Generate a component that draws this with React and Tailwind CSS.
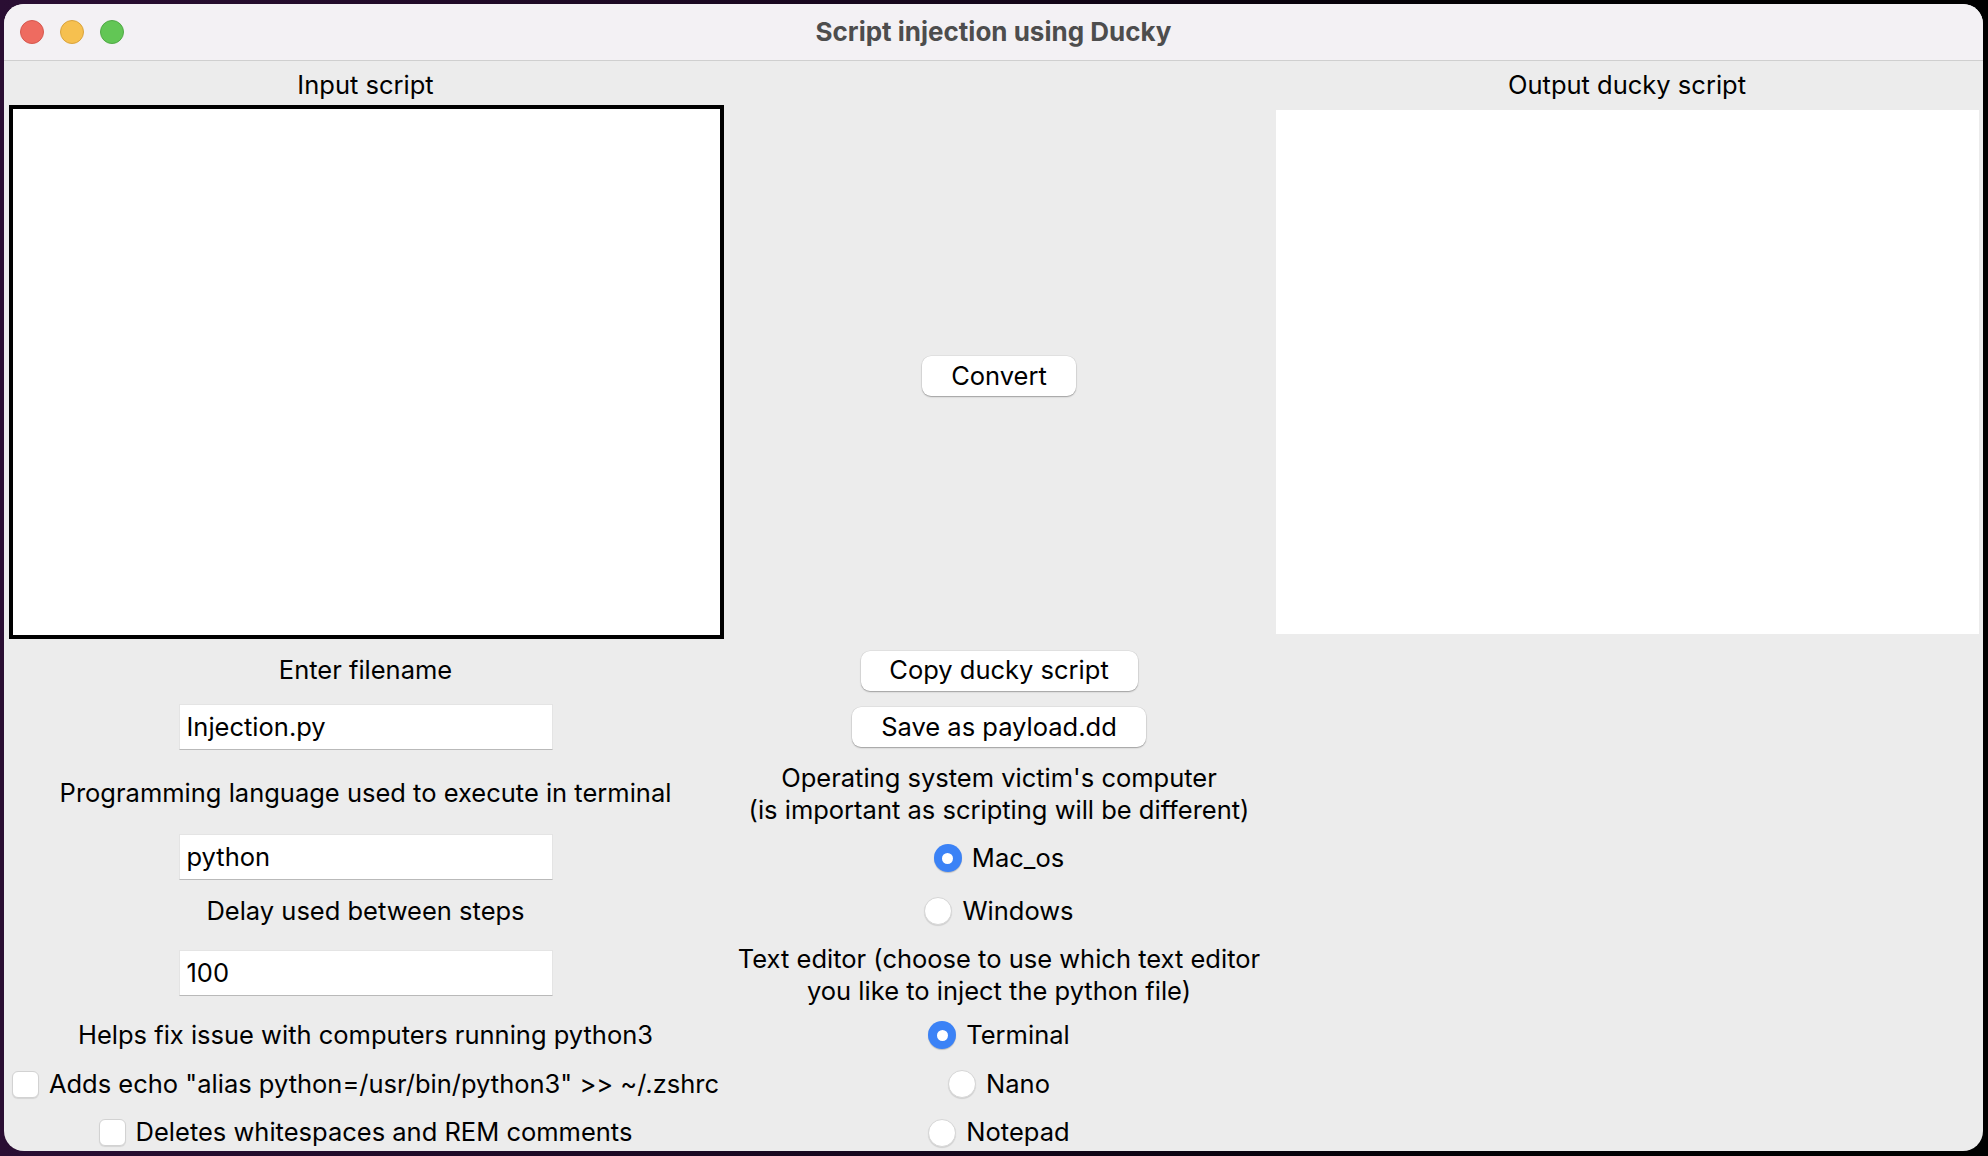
import React from "react";

const font = { fontFamily: "Inter, 'Noto Sans', sans-serif" };

function Entry({ value }) {
  return (
    <div className="w-[374px] h-[46px] bg-white border border-[#e4e4e4] border-b-[#b9b9b9] flex items-center pl-[7px] text-[25.5px] text-black">
      {value}
    </div>
  );
}

function Btn({ children, w }) {
  return (
    <div
      className={`h-[40px] ${w} bg-white rounded-[9px] shadow-[0_1px_1.5px_rgba(0,0,0,0.3),0_0_0_0.5px_rgba(0,0,0,0.08)] flex items-center justify-center text-[25.5px] text-black`}
    >
      {children}
    </div>
  );
}

function Radio({ checked, label }) {
  return (
    <div className="flex items-center gap-[10px]">
      {checked ? (
        <div className="w-[28px] h-[28px] rounded-full bg-[#3b82f6] shadow-[0_1px_1px_rgba(0,0,0,0.2)] flex items-center justify-center">
          <div className="w-[11px] h-[11px] rounded-full bg-white" />
        </div>
      ) : (
        <div className="w-[28px] h-[28px] rounded-full bg-white border border-[#d6d6d6] shadow-[0_1px_1px_rgba(0,0,0,0.12)]" />
      )}
      <span className="text-[25.5px] text-black">{label}</span>
    </div>
  );
}

function Check({ label }) {
  return (
    <div className="flex items-center gap-[10px]">
      <div className="w-[27px] h-[27px] rounded-[6px] bg-white border border-[#d2d2d2] shadow-[0_1px_1px_rgba(0,0,0,0.1)]" />
      <span className="text-[25.5px] text-black">{label}</span>
    </div>
  );
}

export default function App() {
  return (
    <div
      className="w-[1988px] h-[1156px] overflow-hidden bg-linear-to-r from-[#2a0e33] via-[#14061a] to-black pt-[4px] pl-[4px]"
      style={font}
    >
      <div className="w-[1979px] h-[1147px] rounded-[20px] overflow-hidden bg-[#ececec] flex flex-col">
        {/* Title bar */}
        <div className="h-[57px] shrink-0 bg-[#f3f1f4] border-b border-[#cfcfcf] grid grid-cols-[1fr_auto_1fr] items-center">
          <div className="flex items-center gap-[16px] pl-[16px]">
            <div className="w-[24px] h-[24px] rounded-full bg-[#ee6b60] border border-[#d5584e]" />
            <div className="w-[24px] h-[24px] rounded-full bg-[#f6c04f] border border-[#d9a33d]" />
            <div className="w-[24px] h-[24px] rounded-full bg-[#62c655] border border-[#50a946]" />
          </div>
          <div className="text-[26px] font-bold text-[#4d4d4d] pb-[2px]">Script injection using Ducky</div>
          <div />
        </div>

        {/* Body grid */}
        <div className="grid grid-cols-[723px_544px_712px] grid-rows-[44px_534px_63px_50px_82px_46px_60px_66px_56px_44px_45px] text-[25.5px] text-black">
          {/* Row 0 */}
          <div className="flex items-center justify-center pt-[4px]">Input script</div>
          <div />
          <div className="flex items-center justify-center pt-[4px]">Output ducky script</div>

          {/* Row 1 */}
          <div className="pl-[5px] pr-[3px]">
            <div className="w-full h-full bg-white border-[4px] border-black" />
          </div>
          <div className="flex items-center justify-center pt-[8px]">
            <Btn w="w-[154px]">Convert</Btn>
          </div>
          <div className="pl-[5px] pr-[4px] py-[5px]">
            <div className="w-full h-full bg-white" />
          </div>

          {/* Row 2 */}
          <div className="flex items-center justify-center">Enter filename</div>
          <div className="flex items-center justify-center">
            <Btn w="w-[277px]">Copy ducky script</Btn>
          </div>
          <div />

          {/* Row 3 */}
          <div className="flex items-center justify-center">
            <Entry value="Injection.py" />
          </div>
          <div className="flex items-center justify-center">
            <Btn w="w-[294px]">Save as payload.dd</Btn>
          </div>
          <div />

          {/* Row 4 */}
          <div className="flex items-center justify-center">
            Programming language used to execute in terminal
          </div>
          <div className="flex flex-col items-center justify-center leading-[32px] text-center pt-[2px]">
            <span>Operating system victim's computer</span>
            <span>(is important as scripting will be different)</span>
          </div>
          <div />

          {/* Row 5 */}
          <div className="flex items-center justify-center">
            <Entry value="python" />
          </div>
          <div className="flex items-center justify-center pt-[2px]">
            <Radio checked label="Mac_os" />
          </div>
          <div />

          {/* Row 6 */}
          <div className="flex items-center justify-center pt-[2px]">Delay used between steps</div>
          <div className="flex items-center justify-center pt-[2px]">
            <Radio label="Windows" />
          </div>
          <div />

          {/* Row 7 */}
          <div className="flex items-center justify-center">
            <Entry value="100" />
          </div>
          <div className="flex flex-col items-center justify-center leading-[32px] text-center whitespace-nowrap pt-[3px]">
            <span>Text editor (choose to use which text editor</span>
            <span>you like to inject the python file)</span>
          </div>
          <div />

          {/* Row 8 */}
          <div className="flex items-center justify-center pt-[2px]">
            Helps fix issue with computers running python3
          </div>
          <div className="flex items-center justify-center pt-[2px]">
            <Radio checked label="Terminal" />
          </div>
          <div />

          {/* Row 9 */}
          <div className="flex items-center justify-center whitespace-nowrap">
            <Check label={'Adds echo "alias python=/usr/bin/python3" >> ~/.zshrc'} />
          </div>
          <div className="flex items-center justify-center">
            <Radio label="Nano" />
          </div>
          <div />

          {/* Row 10 */}
          <div className="flex items-center justify-center pt-[8px]">
            <Check label="Deletes whitespaces and REM comments" />
          </div>
          <div className="flex items-center justify-center pt-[8px]">
            <Radio label="Notepad" />
          </div>
          <div />
        </div>
      </div>
    </div>
  );
}
